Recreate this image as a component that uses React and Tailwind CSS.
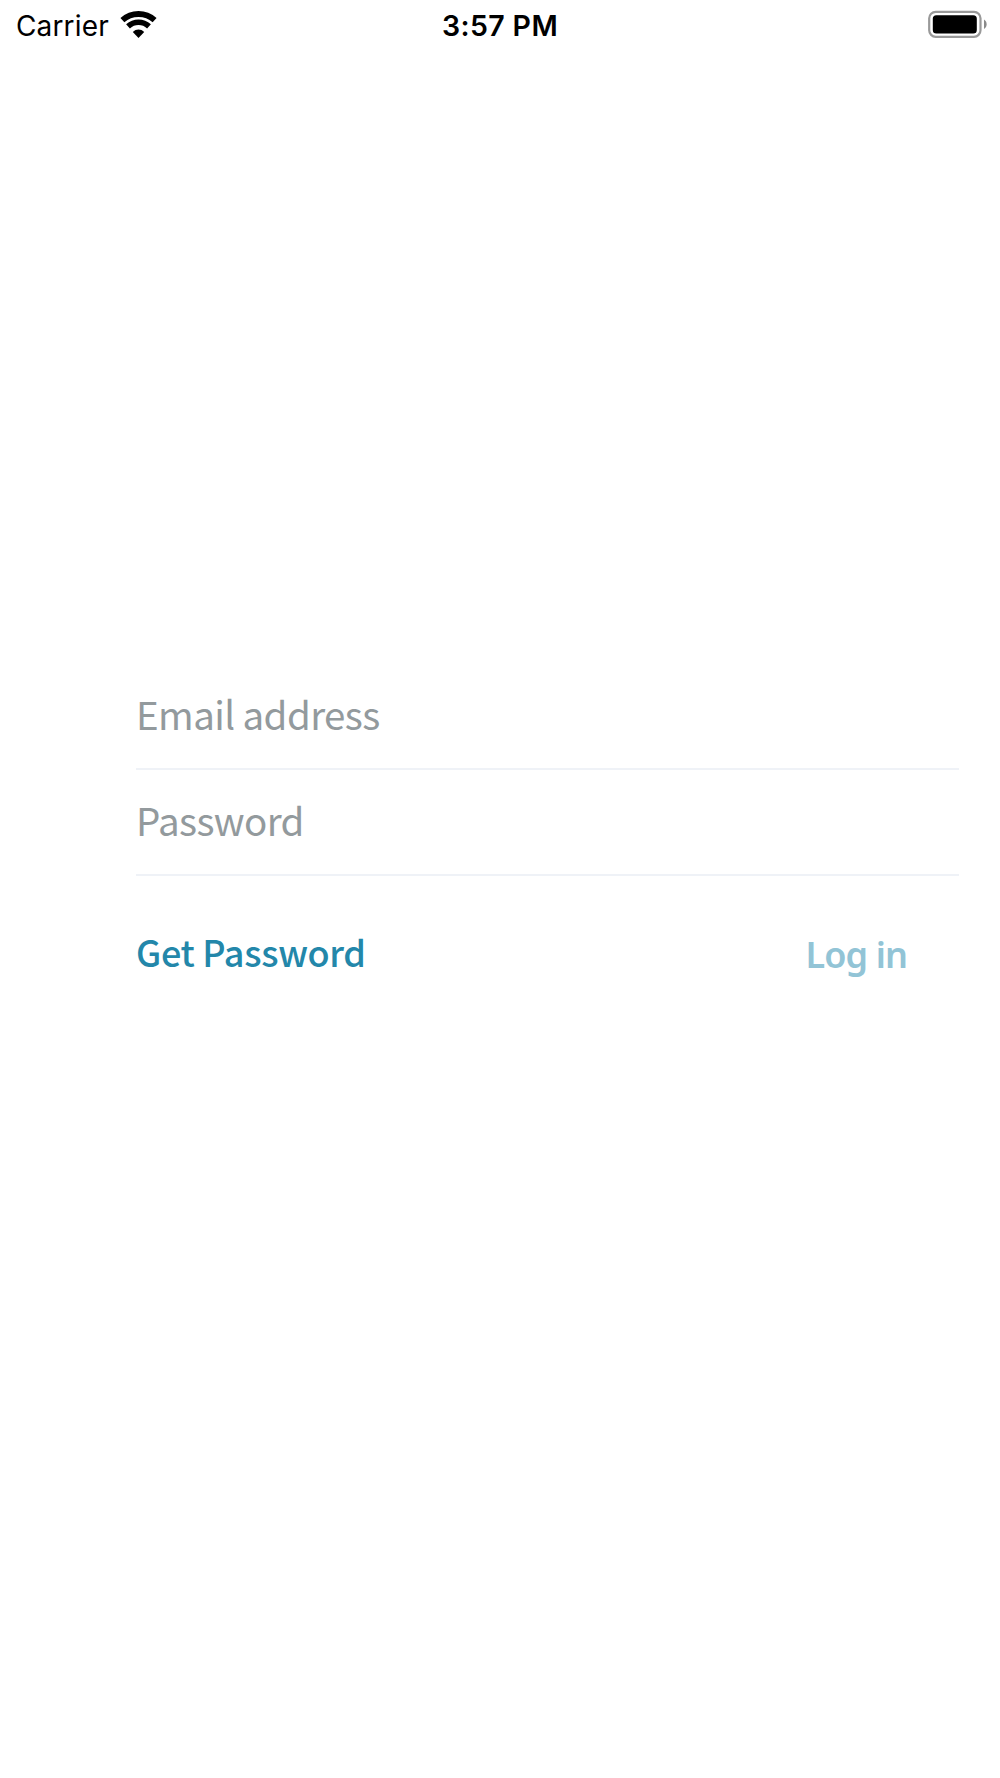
import { useState } from "react";

function StatusBar() {
  return (
    <header className="grid grid-cols-3 items-center h-[50px] pl-[16px] pr-[13px] font-['Inter',sans-serif] text-[28px] leading-[50px] text-black">
      <div className="flex items-center gap-[11px]">
        <span className="pt-px tracking-[0.15px]">Carrier</span>
        <svg width="38" height="28" viewBox="0 0 38 28" className="-mt-[2px]" fill="none">
          <path d="M2.400 9.200C11.500.9 25.500.9 34.600 9.200" stroke="#000" strokeWidth="5.800" />
          <path d="M8 15.400C14 9.900 23 9.900 29 15.400" stroke="#000" strokeWidth="5.600" />
          <path d="M12.800 20.900C16 17.600 21 17.600 24.200 20.900L18.500 27Z" fill="#000" />
        </svg>
      </div>
      <span className="pt-px -ml-[3px] text-center font-[560] text-[28.5px] tracking-[0.4px]">3:57 PM</span>
      <svg width="60" height="28" viewBox="0 0 60 28" className="justify-self-end -mt-[3px]" fill="none">
        <rect x="2.200" y="1.800" width="51.300" height="25" rx="6.500" stroke="#999" strokeWidth="2.200" />
        <rect x="5.800" y="5.200" width="44" height="18.200" rx="3.500" fill="#000" />
        <path d="M57 9.500C60.500 11.500 60.500 17 57 19Z" fill="#8a8a8a" />
      </svg>
    </header>
  );
}

function Field({ type, placeholder, value, onChange }) {
  return (
    <input
      type={type}
      placeholder={placeholder}
      value={value}
      onChange={(e) => onChange(e.target.value)}
      className="block w-full h-[106px] pb-[6px] border-b-2 border-[#eff2f7] bg-transparent text-[38.5px] font-normal tracking-[-0.6px] text-[#3c464b] placeholder:text-[#939a9d] placeholder:opacity-100 outline-none"
    />
  );
}

function App() {
  const [email, setEmail] = useState("");
  const [password, setPassword] = useState("");

  return (
    <div className="min-h-[1778px] bg-white">
      <StatusBar />

      <form
        onSubmit={(e) => e.preventDefault()}
        className="pt-[614px] pl-[136px] pr-[41px] font-['Noto_Sans_CJK_SC',sans-serif]"
      >
        <Field type="email" placeholder="Email address" value={email} onChange={setEmail} />
        <Field type="password" placeholder="Password" value={password} onChange={setPassword} />

        <div className="flex items-start justify-between pt-[50px] pr-[52px] text-[36px] leading-[50px] font-medium text-[#2387aa]">
          <button type="button" className="tracking-[-0.3px]">
            Get Password
          </button>
          <button
            type="submit"
            className="pt-[4px] font-['Noto_Sans',sans-serif] font-semibold tracking-[-0.9px] text-[#92c4d6]"
          >
            Log in
          </button>
        </div>
      </form>
    </div>
  );
}

export default App;
